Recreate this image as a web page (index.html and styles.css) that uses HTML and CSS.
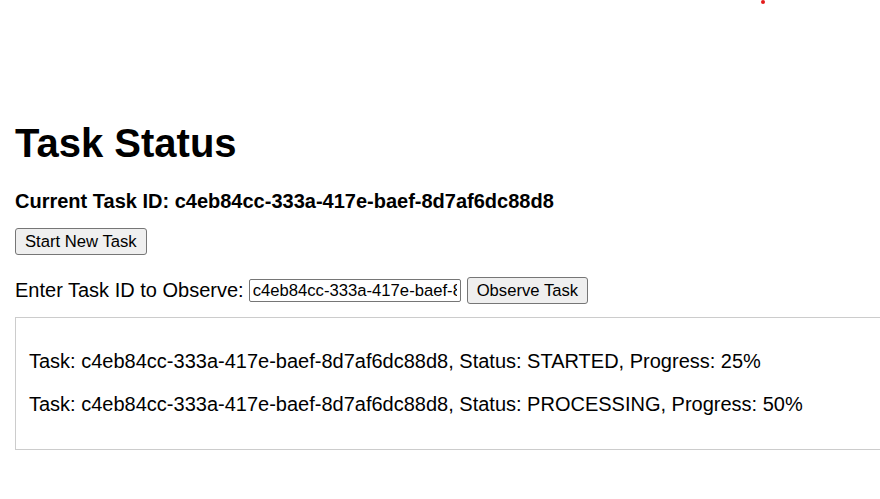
FILE: index.html
```html
<!DOCTYPE html>
<html>
<head>
<meta charset="utf-8">
<title>Task Status</title>
<link rel="stylesheet" href="styles.css">
</head>
<body>
<span class="dot"></span>
<main class="page">
  <h1 class="title">Task Status</h1>
  <h4 class="current">Current Task ID: c4eb84cc-333a-417e-baef-8d7af6dc88d8</h4>
  <div class="start-row"><button class="btn">Start New Task</button></div>
  <div class="observe-row">
    <label class="observe-label" for="tid">Enter Task ID to Observe:</label>
    <input id="tid" class="tid" type="text" value="c4eb84cc-333a-417e-baef-8d7af6dc88d8">
    <button class="btn">Observe Task</button>
  </div>
  <div class="log">
    <p class="log-line">Task: c4eb84cc-333a-417e-baef-8d7af6dc88d8, Status: STARTED, Progress: 25%</p>
    <p class="log-line">Task: c4eb84cc-333a-417e-baef-8d7af6dc88d8, Status: PROCESSING, Progress: 50%</p>
  </div>
</main>
</body>
</html>
```

FILE: styles.css
```css
html, body {
  margin: 0;
  padding: 0;
  overflow: hidden;
  background: #fff;
}
body {
  font-family: "Liberation Sans", Arial, sans-serif;
  font-size: 20px;
  color: #000;
}
.dot {
  position: absolute;
  left: 761px;
  top: 0;
  width: 4px;
  height: 4px;
  border-radius: 50%;
  background: #e31b1b;
}
.page {
  padding: 93px 15px 0;
}
.title {
  font-size: 40px;
  font-weight: bold;
  margin: 27px 0 24px;
  line-height: 46px;
}
.current {
  font-size: 20px;
  font-weight: bold;
  margin: 0 0 15px;
  line-height: 23px;
}
.btn {
  font-family: "Liberation Sans", Arial, sans-serif;
  font-size: 16.67px;
  line-height: 19px;
  padding: 3px 9px 3px;
  background: #efefef;
  border: 1px solid #767676;
  border-radius: 3px;
  color: #000;
  margin: 0;
}
.start-row {
  display: flex;
}
.observe-row {
  display: flex;
  align-items: center;
  margin-top: 22px;
  height: 27px;
}
.observe-label {
  margin-right: 5px;
}
.tid {
  box-sizing: border-box;
  width: 212px;
  height: 23px;
  font-family: "Liberation Sans", Arial, sans-serif;
  font-size: 16.67px;
  padding: 1px 3px;
  border: 1px solid #767676;
  border-radius: 2px;
  margin: 0 6px 0 0;
}
.log {
  margin-top: 13px;
  border: 1px solid #ccc;
  padding: 12px 13px 13px;
  width: 100%;
}
.log-line {
  margin: 20px 0;
  line-height: 23px;
}
```
